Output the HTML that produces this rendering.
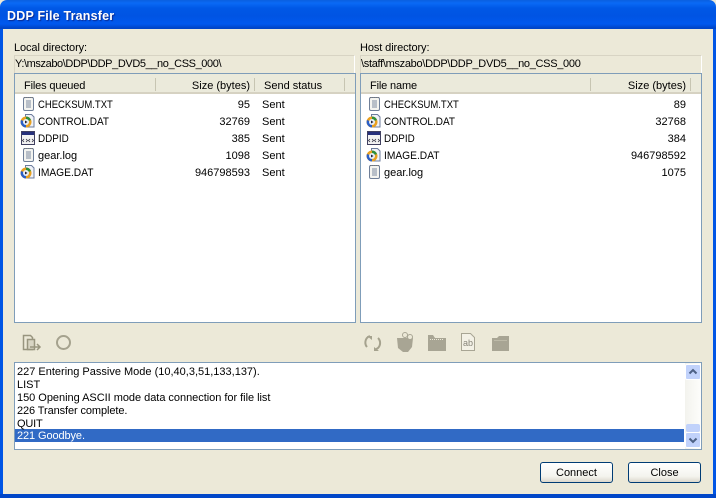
<!DOCTYPE html>
<html><head><meta charset="utf-8"><style>
html,body{margin:0;padding:0;background:#ece9d8}
#w{position:relative;width:716px;height:498px;overflow:hidden;background:#ece9d8;font:11px/13px "Liberation Sans",sans-serif;color:#000}
#w div,#w svg{position:absolute}
.t{white-space:nowrap}
.c1,.c2,.c3,.c4{transform-origin:0 0}
.c1{transform:scaleX(.862)}
.c2{transform:scaleX(.91)}
.c3{transform:scaleX(.9)}
.c4{transform:scaleX(.93)}
.r{text-align:right;white-space:nowrap}
.box{background:#fff;border:1px solid #7f9db9;box-sizing:border-box}
.path{border:1px solid #d8d4c4;border-right-color:#fff;border-bottom:0;box-sizing:border-box;height:18px;top:55px}
.hd{top:74px;height:20px;background:#ebeadb;border-bottom:2px solid #d6d2c2;box-sizing:border-box}
.sep{top:78px;width:1px;height:13px;background:#c7c5b2}
.btn{top:462px;width:73px;height:21px;border:1px solid #003c74;border-radius:3px;box-sizing:border-box;background:linear-gradient(#fff,#f4f4ee 70%,#dcd8cc);text-align:center;line-height:20px;font-size:11px}
</style></head><body><div id="w">
<div style="left:0;top:0;width:716px;height:29px;background:linear-gradient(#0a5fe0 0,#0a6af5 3px,#0058e6 8px,#0054e3 16px,#0058ee 24px,#0045c8 28px);border-radius:7px 7px 0 0"></div>
<div class="t" style="left:7px;top:9px;font:bold 12.5px/15px 'Liberation Sans',sans-serif;color:#fff;text-shadow:1px 1px 1px #0a2a90;letter-spacing:.2px">DDP File Transfer</div>
<div style="left:0;top:29px;width:3px;height:469px;background:#0055e5"></div>
<div style="left:713px;top:29px;width:3px;height:469px;background:#0055e5"></div>
<div style="left:0;top:494px;width:716px;height:4px;background:#0046c8"></div>

<div class="t" style="left:14px;top:42px;letter-spacing:-.1px">Local directory:</div>
<div class="t" style="left:360px;top:42px;letter-spacing:-.1px">Host directory:</div>
<div class="path" style="left:14px;width:341px"></div>
<div class="path" style="left:360px;width:342px"></div>
<div class="t" style="left:15px;top:58px;letter-spacing:-.4px">Y:\mszabo\DDP\DDP_DVD5__no_CSS_000\</div>
<div class="t" style="left:361px;top:58px;letter-spacing:-.3px">\staff\mszabo\DDP\DDP_DVD5__no_CSS_000</div>

<div class="box" style="left:14px;top:73px;width:342px;height:250px"></div>
<div class="box" style="left:360px;top:73px;width:342px;height:250px"></div>
<div class="hd" style="left:15px;width:340px"></div>
<div class="hd" style="left:361px;width:340px"></div>
<div class="sep" style="left:155px"></div><div class="sep" style="left:254px"></div><div class="sep" style="left:344px"></div>
<div class="sep" style="left:590px"></div><div class="sep" style="left:690px"></div>
<div class="t" style="left:24px;top:80px;letter-spacing:-.15px">Files queued</div>
<div class="r" style="left:150px;width:100px;top:80px">Size (bytes)</div>
<div class="t" style="left:264px;top:80px">Send status</div>
<div class="t" style="left:370px;top:80px;letter-spacing:-.15px">File name</div>
<div class="r" style="left:586px;width:100px;top:80px">Size (bytes)</div>

<svg width="0" height="0" style="display:none"><defs>
<g id="txt"><rect x="3.500" y="1.500" width="10" height="13" rx="1.500" fill="#f4f4f0" stroke="#6f7f98"/><path d="M4 1.500h9" stroke="#777" stroke-dasharray="1 1"/><path d="M6 5h5M6 7h5M6 9h5M6 11h5" stroke="#7d8aa0"/></g>
<g id="dat"><path d="M5.500 1.500h6l2.500 2.500v10h-8.500z" fill="#f0f2f8" stroke="#6c7c9c"/><circle cx="6" cy="9" r="5.500" fill="#e9a020"/><path d="M6 3.500a5.500 5.500 0 0 1 5 3.500l-5 2z" fill="#2f8f3a"/><path d="M6 14.500a5.500 5.500 0 0 1-5-7.500l5 2z" fill="#2a5fc8"/><circle cx="6" cy="9" r="3" fill="#e8eef8"/><path d="M5 7.500l2.500 1.500-2.500 1.500z" fill="#223"/></g>
<g id="ddp"><rect x="1.500" y="1.500" width="13" height="13" fill="#f2f2f2" stroke="#404060"/><rect x="2" y="2" width="12" height="3" fill="#26307c"/><path d="M4 9l-1.500 1.500 1.500 1.500M6 9l1.500 1.500-1.500 1.500M10 9l-1.500 1.500 1.500 1.500M12 9l1.500 1.500-1.500 1.500" fill="none" stroke="#334" stroke-width=".8"/></g>
</defs></svg>

<!-- left rows -->
<svg style="left:20px;top:96px" width="16" height="16"><use href="#txt"/></svg>
<svg style="left:20px;top:113px" width="16" height="16"><use href="#dat"/></svg>
<svg style="left:20px;top:130px" width="16" height="16"><use href="#ddp"/></svg>
<svg style="left:20px;top:147px" width="16" height="16"><use href="#txt"/></svg>
<svg style="left:20px;top:164px" width="16" height="16"><use href="#dat"/></svg>
<div class="t c1" style="left:38px;top:99px">CHECKSUM.TXT</div>
<div class="t c2" style="left:38px;top:116px">CONTROL.DAT</div>
<div class="t c3" style="left:38px;top:133px">DDPID</div>
<div class="t" style="left:38px;top:150px">gear.log</div>
<div class="t c4" style="left:38px;top:167px">IMAGE.DAT</div>
<div class="r" style="left:150px;width:100px;top:99px">95</div>
<div class="r" style="left:150px;width:100px;top:116px">32769</div>
<div class="r" style="left:150px;width:100px;top:133px">385</div>
<div class="r" style="left:150px;width:100px;top:150px">1098</div>
<div class="r" style="left:150px;width:100px;top:167px">946798593</div>
<div class="t" style="left:262px;top:99px">Sent</div>
<div class="t" style="left:262px;top:116px">Sent</div>
<div class="t" style="left:262px;top:133px">Sent</div>
<div class="t" style="left:262px;top:150px">Sent</div>
<div class="t" style="left:262px;top:167px">Sent</div>

<!-- right rows -->
<svg style="left:366px;top:96px" width="16" height="16"><use href="#txt"/></svg>
<svg style="left:366px;top:113px" width="16" height="16"><use href="#dat"/></svg>
<svg style="left:366px;top:130px" width="16" height="16"><use href="#ddp"/></svg>
<svg style="left:366px;top:147px" width="16" height="16"><use href="#dat"/></svg>
<svg style="left:366px;top:164px" width="16" height="16"><use href="#txt"/></svg>
<div class="t c1" style="left:384px;top:99px">CHECKSUM.TXT</div>
<div class="t c2" style="left:384px;top:116px">CONTROL.DAT</div>
<div class="t c3" style="left:384px;top:133px">DDPID</div>
<div class="t c4" style="left:384px;top:150px">IMAGE.DAT</div>
<div class="t" style="left:384px;top:167px">gear.log</div>
<div class="r" style="left:586px;width:100px;top:99px">89</div>
<div class="r" style="left:586px;width:100px;top:116px">32768</div>
<div class="r" style="left:586px;width:100px;top:133px">384</div>
<div class="r" style="left:586px;width:100px;top:150px">946798592</div>
<div class="r" style="left:586px;width:100px;top:167px">1075</div>

<!-- toolbar -->
<svg style="left:20px;top:332px" width="24" height="22"><path d="M3.500 3.500h7l2 2v12h-9z" fill="#ece9d8" stroke="#98957f" stroke-width="1.500"/><path d="M7.500 7.500h7v10h-7z" fill="#d8d5c4" stroke="#98957f" stroke-width="1.500"/><path d="M10 15h9M17 12l3 3-3 3" fill="none" stroke="#98957f" stroke-width="1.500"/></svg>
<svg style="left:54px;top:333px" width="20" height="20"><circle cx="9.500" cy="9.500" r="6.500" fill="#ece9d8" stroke="#a5a28e" stroke-width="2"/></svg>
<svg style="left:362px;top:332px" width="22" height="22"><path d="M5 15a7 7 0 0 1 1-10l2-1M16 6a7 7 0 0 1 0 10l-3 2" fill="none" stroke="#a5a28e" stroke-width="2"/><path d="M5 4h5v4zM17 19h-5v-4z" fill="#a5a28e"/></svg>
<svg style="left:395px;top:331px" width="22" height="23"><path d="M2 7h16l-1 9-4 5H8l-5-4z" fill="#a8a594"/><circle cx="10" cy="4" r="2.500" fill="#ece9d8" stroke="#a8a594"/><circle cx="15" cy="6" r="2.500" fill="#ece9d8" stroke="#a8a594"/></svg>
<svg style="left:427px;top:334px" width="20" height="18"><path d="M1 1h5l2 3h11v13H1z" fill="#a8a594"/><path d="M3 5.500h14" stroke="#ece9d8" stroke-dasharray="1 1"/></svg>
<svg style="left:460px;top:332px" width="17" height="20"><path d="M1.500 1.500h9l4 4v13h-13z" fill="#f3f1e6" stroke="#a8a594"/><text x="3" y="14" font-family="Liberation Sans" font-size="9" fill="#88857a">ab</text></svg>
<svg style="left:491px;top:335px" width="19" height="17"><path d="M1 3h5l2-2h10v15H1z" fill="#a8a594"/><path d="M3 5.500h13" stroke="#bdbaa8"/></svg>

<!-- log -->
<div class="box" style="left:14px;top:362px;width:688px;height:88px"></div>
<div style="left:15px;top:429px;width:669px;height:13px;background:#316ac5"></div>
<div class="t" style="left:17px;top:366px">227 Entering Passive Mode (10,40,3,51,133,137).</div>
<div class="t" style="left:17px;top:379px">LIST</div>
<div class="t" style="left:17px;top:392px;letter-spacing:-.03px">150 Opening ASCII mode data connection for file list</div>
<div class="t" style="left:17px;top:405px;letter-spacing:-.1px">226 Transfer complete.</div>
<div class="t" style="left:17px;top:418px;letter-spacing:-.2px">QUIT</div>
<div class="t" style="left:17px;top:430px;color:#fff;letter-spacing:-.1px">221 Goodbye.</div>
<div style="left:685px;top:363px;width:16px;height:86px;background:linear-gradient(90deg,#f3f3ee,#fdfdfb)"></div>
<div style="left:685px;top:364px;width:16px;height:16px;background:#c1d2fb;border:1px solid #fff;box-sizing:border-box;border-radius:2px"></div>
<svg style="left:685px;top:364px" width="16" height="16"><path d="M4.500 9.500l3.500-3.500 3.500 3.500" fill="none" stroke="#4d6185" stroke-width="2"/></svg>
<div style="left:686px;top:424px;width:14px;height:8px;background:#c1d2fb;border-radius:2px"></div>
<div style="left:685px;top:432px;width:16px;height:16px;background:#c1d2fb;border:1px solid #fff;box-sizing:border-box;border-radius:2px"></div>
<svg style="left:685px;top:432px" width="16" height="16"><path d="M4.500 6.500l3.500 3.500 3.500-3.500" fill="none" stroke="#4d6185" stroke-width="2"/></svg>

<div class="btn" style="left:540px">Connect</div>
<div class="btn" style="left:628px">Close</div>
</div></body></html>
